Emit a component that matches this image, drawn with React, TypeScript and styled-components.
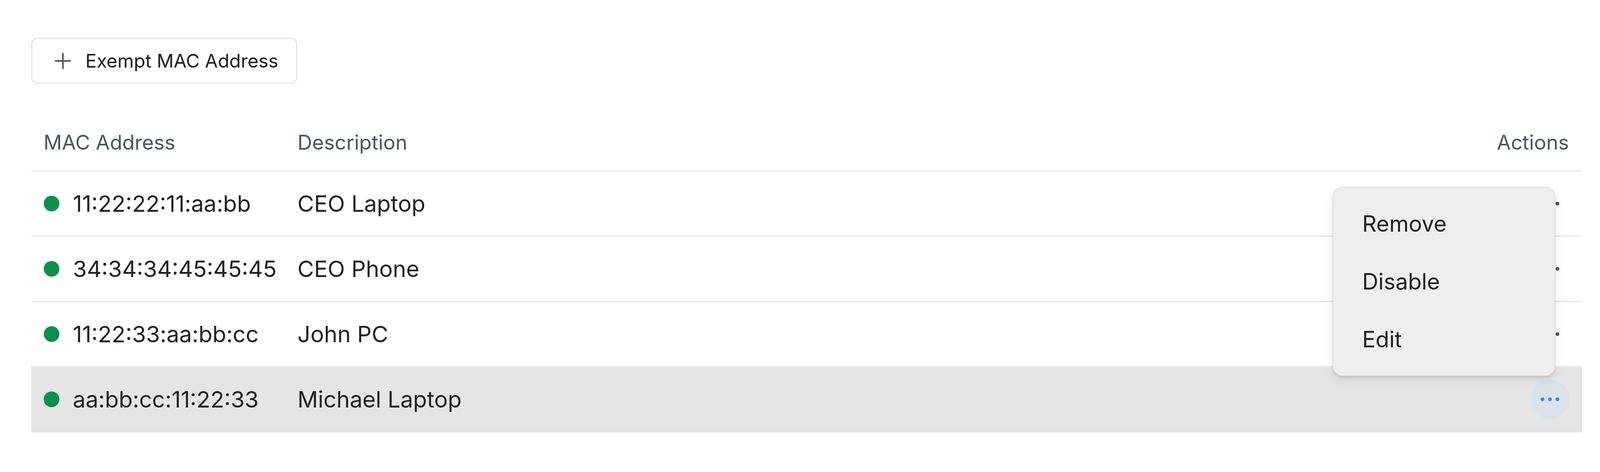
import React from 'react';
import styled, { createGlobalStyle } from 'styled-components';

const DEVICES = [
  { mac: '11:22:22:11:aa:bb', description: 'CEO Laptop' },
  { mac: '34:34:34:45:45:45', description: 'CEO Phone' },
  { mac: '11:22:33:aa:bb:cc', description: 'John PC' },
  { mac: 'aa:bb:cc:11:22:33', description: 'Michael Laptop', active: true },
];

const MENU_ITEMS = ['Remove', 'Disable', 'Edit'];

export default function App() {
  return (
    <>
      <GlobalStyle />
      <Wrapper>
        <AddButton type="button">
          <PlusIcon />
          Exempt MAC Address
        </AddButton>
        <TableWrap>
          <HeaderRow>
            <HeadCell>MAC Address</HeadCell>
            <HeadCell>Description</HeadCell>
            <HeadCell $right>Actions</HeadCell>
          </HeaderRow>
          {DEVICES.map((d) => (
            <Row key={d.mac} $active={!!d.active}>
              <Cell>
                <StatusDot />
                {d.mac}
              </Cell>
              <Cell>{d.description}</Cell>
              <Cell $right>
                <DotsButton type="button" $active={!!d.active} aria-label="Actions">
                  <DotsIcon />
                </DotsButton>
              </Cell>
            </Row>
          ))}
          <Menu>
            {MENU_ITEMS.map((item) => (
              <MenuItem key={item}>{item}</MenuItem>
            ))}
          </Menu>
        </TableWrap>
      </Wrapper>
    </>
  );
}

function PlusIcon() {
  return (
    <svg width="42" height="42" viewBox="0 0 42 42" fill="none">
      <path d="M21 2v38M2 21h38" stroke="#4b5563" strokeWidth="4" strokeLinecap="round" />
    </svg>
  );
}

function DotsIcon() {
  return (
    <svg width="48" height="12" viewBox="0 0 48 12" fill="currentColor">
      <circle cx="5" cy="6" r="4.8" />
      <circle cx="24" cy="6" r="4.8" />
      <circle cx="43" cy="6" r="4.8" />
    </svg>
  );
}

const GlobalStyle = createGlobalStyle`
  html, body {
    margin: 0;
    background: #ffffff;
    font-family: Inter, "Noto Sans", sans-serif;
  }
`;

const Wrapper = styled.div`
  padding: 97px 1.134vw 0 1.943vw;
`;

const AddButton = styled.button`
  display: inline-flex;
  align-items: center;
  gap: 37px;
  height: 117px;
  padding: 0 46px 0 57px;
  border: 3px solid #e4e4e4;
  border-radius: 15px;
  background: #ffffff;
  color: #1f1f1f;
  font-family: Inter, sans-serif;
  font-size: 48px;
  cursor: pointer;
`;

const TableWrap = styled.div`
  position: relative;
  margin-top: 75px;
`;

const columns = `
  display: grid;
  grid-template-columns: max(650px, 13.99vw) 1fr 20vw;
  align-items: center;
  border-bottom: 3px solid #e5e5e5;
`;

const HeaderRow = styled.div`
  ${columns}
  height: 150px;
  box-sizing: border-box;
  padding-top: 4px;
`;

const HeadCell = styled.div<{ $right?: boolean }>`
  padding: 0 33px 0 32px;
  text-align: ${(p) => (p.$right ? 'right' : 'left')};
  font-size: 52px;
  color: #4b5563;
`;

const Row = styled.div<{ $active: boolean }>`
  ${columns}
  height: 167px;
  box-sizing: border-box;
  background: ${(p) => (p.$active ? '#e5e5e5' : 'transparent')};
`;

const Cell = styled.div<{ $right?: boolean }>`
  display: flex;
  align-items: center;
  justify-content: ${(p) => (p.$right ? 'flex-end' : 'flex-start')};
  gap: 35px;
  padding: 0 32px;
  font-size: 58px;
  color: #222222;
  white-space: nowrap;
`;

const StatusDot = styled.span`
  width: 40px;
  height: 40px;
  border-radius: 50%;
  background: #07914b;
  flex-shrink: 0;
`;

const DotsButton = styled.button<{ $active: boolean }>`
  display: inline-flex;
  align-items: center;
  justify-content: center;
  width: 100px;
  height: 100px;
  padding: 0;
  border: none;
  border-radius: 50%;
  background: ${(p) => (p.$active ? '#dae2ea' : 'transparent')};
  color: ${(p) => (p.$active ? '#3b87dc' : '#4b5563')};
`;

const Menu = styled.div`
  position: absolute;
  top: 189px;
  right: 69px;
  width: 13.89vw;
  box-sizing: border-box;
  padding: 18px 0;
  border: 2px solid #e3e3e3;
  border-radius: 24px;
  background: #eeeeee;
  box-shadow: 0 4px 6px rgba(0, 0, 0, 0.12), 0 10px 30px rgba(0, 0, 0, 0.08);
`;

const MenuItem = styled.div`
  display: flex;
  align-items: center;
  height: 148px;
  padding-left: 1.8vw;
  font-size: 57px;
  color: #222222;
`;
